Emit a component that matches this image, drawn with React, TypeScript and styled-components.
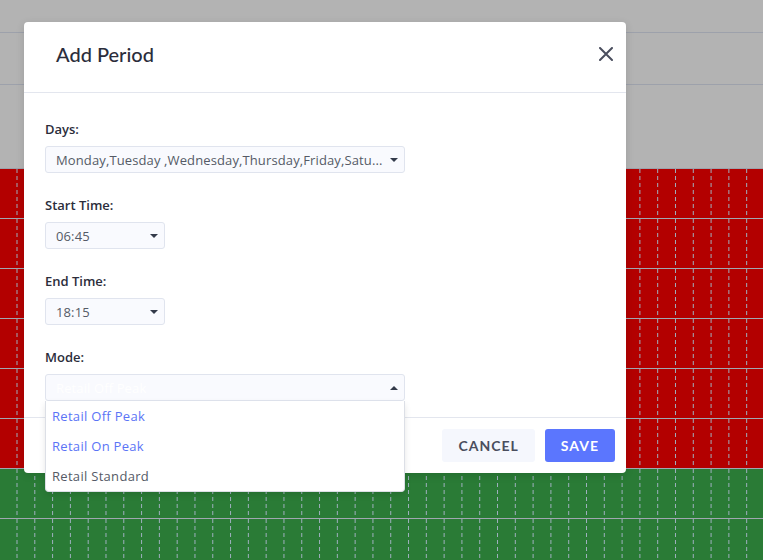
import React from 'react';
import styled, { createGlobalStyle } from 'styled-components';

const GlobalStyle = createGlobalStyle`
  html, body {
    margin: 0;
    padding: 0;
  }
  body {
    font-family: "Open Sans", "Noto Sans", sans-serif;
    width: 763px;
    height: 560px;
    overflow: hidden;
  }
`;

const LINE = '#a0a7b1';
const DASH = '#9fb0bf';

const Page = styled.div`
  position: relative;
  width: 763px;
  height: 560px;
  overflow: hidden;
`;

const Chart = styled.div`
  display: flex;
  flex-direction: column;
  height: 100%;
`;

const BandRow = styled.div<{ $h: number }>`
  height: ${(p) => p.$h}px;
  flex: 0 0 auto;
  box-sizing: border-box;
  background: #b3b3b3;
  border-bottom: 1px solid #9da1ab;
`;

const GridRow = styled.div<{ $fill: string }>`
  height: 50px;
  flex: 0 0 auto;
  box-sizing: border-box;
  border-bottom: 1px solid ${LINE};
  background-color: ${(p) => p.$fill};
  background-image:
    repeating-linear-gradient(to bottom, transparent 0 4px, ${(p) => p.$fill} 4px 7px),
    linear-gradient(to right, ${DASH} 0 1px, transparent 1px);
  background-size: 100% 100%, 17.8px 100%;
  background-position: 0 0, 16.5px 0;
  background-repeat: no-repeat, repeat-x;
`;

const Modal = styled.div`
  position: absolute;
  left: 24px;
  top: 22px;
  width: 602px;
  height: 451px;
  background: #fff;
  border-radius: 4px;
  box-shadow: 0 2px 8px rgba(0, 0, 0, 0.12);
  display: flex;
  flex-direction: column;
`;

const Header = styled.div`
  height: 71px;
  box-sizing: border-box;
  border-bottom: 1px solid #e3e6ee;
  display: flex;
  align-items: center;
  justify-content: space-between;
  padding: 0 12px 6px 32px;
`;

const Title = styled.h2`
  margin: 0;
  font-family: Lato, "Noto Sans", sans-serif;
  font-size: 20px;
  font-weight: 500;
  color: #2b2d3b;
`;

const CloseButton = styled.button`
  border: 0;
  background: none;
  padding: 0;
  width: 16px;
  height: 16px;
  display: flex;
  align-items: center;
  justify-content: center;
  cursor: pointer;
`;

const Body = styled.div`
  position: relative;
  flex: 1;
  padding: 27px 21px 16px;
  border-bottom: 1px solid #e3e6ee;
  display: flex;
  flex-direction: column;
  gap: 23px;
`;

const Field = styled.div`
  display: flex;
  flex-direction: column;
  gap: 8px;
`;

const Label = styled.label`
  font-size: 13px;
  line-height: 18px;
  font-weight: 600;
  color: #2b2d3b;
`;

const Select = styled.div<{ $w: number; $ghost?: boolean }>`
  position: relative;
  width: ${(p) => p.$w}px;
  height: 27px;
  box-sizing: border-box;
  border: 1px solid #e0e4ee;
  border-radius: 3px;
  background: #f9fafe;
  display: flex;
  align-items: center;
  padding: 0 24px 0 10px;
  font-size: 13px;
  letter-spacing: 0.12px;
  color: ${(p) => (p.$ghost ? '#ffffff' : '#555a66')};
  white-space: nowrap;
  overflow: hidden;
`;

const Caret = styled.span<{ $up?: boolean }>`
  position: absolute;
  right: 6px;
  top: 50%;
  margin-top: -2px;
  width: 0;
  height: 0;
  border-left: 4px solid transparent;
  border-right: 4px solid transparent;
  ${(p) => (p.$up ? 'border-bottom: 4px solid #333a4a;' : 'border-top: 4px solid #333a4a;')}
`;

const Menu = styled.ul`
  position: absolute;
  left: 21px;
  top: 308px;
  width: 360px;
  margin: 0;
  padding: 0;
  list-style: none;
  box-sizing: border-box;
  background: #fff;
  border: 1px solid #dcdfe6;
  border-top: 0;
  border-radius: 0 0 4px 4px;
  box-shadow: 0 3px 6px rgba(0, 0, 0, 0.1);
  z-index: 2;
`;

const Option = styled.li<{ $active?: boolean }>`
  height: 30px;
  line-height: 30px;
  padding-left: 6px;
  font-size: 13px;
  letter-spacing: 0.3px;
  color: ${(p) => (p.$active ? '#5b74f6' : '#555a66')};
`;

const Footer = styled.div`
  height: 55px;
  display: flex;
  align-items: center;
  justify-content: flex-end;
  gap: 10px;
  padding-right: 11px;
`;

const Button = styled.button<{ $primary?: boolean }>`
  height: 33px;
  border: 0;
  border-radius: 3px;
  padding: 0 16px;
  font-family: Lato, "Noto Sans", sans-serif;
  font-size: 14px;
  font-weight: 700;
  letter-spacing: 1px;
  text-transform: uppercase;
  background: ${(p) => (p.$primary ? '#5b76fe' : '#f5f7fd')};
  color: ${(p) => (p.$primary ? '#ffffff' : '#4a4e5e')};
  cursor: pointer;
`;

const RED = '#b30000';
const GREEN = '#2a7b36';

export default function App() {
  const rows = [RED, RED, RED, RED, RED, RED, GREEN, GREEN];
  return (
    <Page>
      <GlobalStyle />
      <Chart>
        <BandRow $h={33} />
        <BandRow $h={52} />
        <BandRow $h={84} />
        {rows.map((fill, i) => (
          <GridRow key={i} $fill={fill} />
        ))}
      </Chart>
      <Modal>
        <Header>
          <Title>Add Period</Title>
          <CloseButton aria-label="Close">
            <svg width="14" height="14" viewBox="0 0 14 14">
              <path d="M1 1L13 13M13 1L1 13" stroke="#4a4e5e" strokeWidth="2" strokeLinecap="round" />
            </svg>
          </CloseButton>
        </Header>
        <Body>
          <Field>
            <Label>Days:</Label>
            <Select $w={360}>
              Monday,Tuesday ,Wednesday,Thursday,Friday,Satu...
              <Caret />
            </Select>
          </Field>
          <Field>
            <Label>Start Time:</Label>
            <Select $w={120}>
              06:45
              <Caret />
            </Select>
          </Field>
          <Field>
            <Label>End Time:</Label>
            <Select $w={120}>
              18:15
              <Caret />
            </Select>
          </Field>
          <Field>
            <Label>Mode:</Label>
            <Select $w={360} $ghost>
              Retail Off Peak
              <Caret $up />
            </Select>
          </Field>
          <Menu>
            <Option $active>Retail Off Peak</Option>
            <Option $active>Retail On Peak</Option>
            <Option>Retail Standard</Option>
          </Menu>
        </Body>
        <Footer>
          <Button>Cancel</Button>
          <Button $primary>Save</Button>
        </Footer>
      </Modal>
    </Page>
  );
}
